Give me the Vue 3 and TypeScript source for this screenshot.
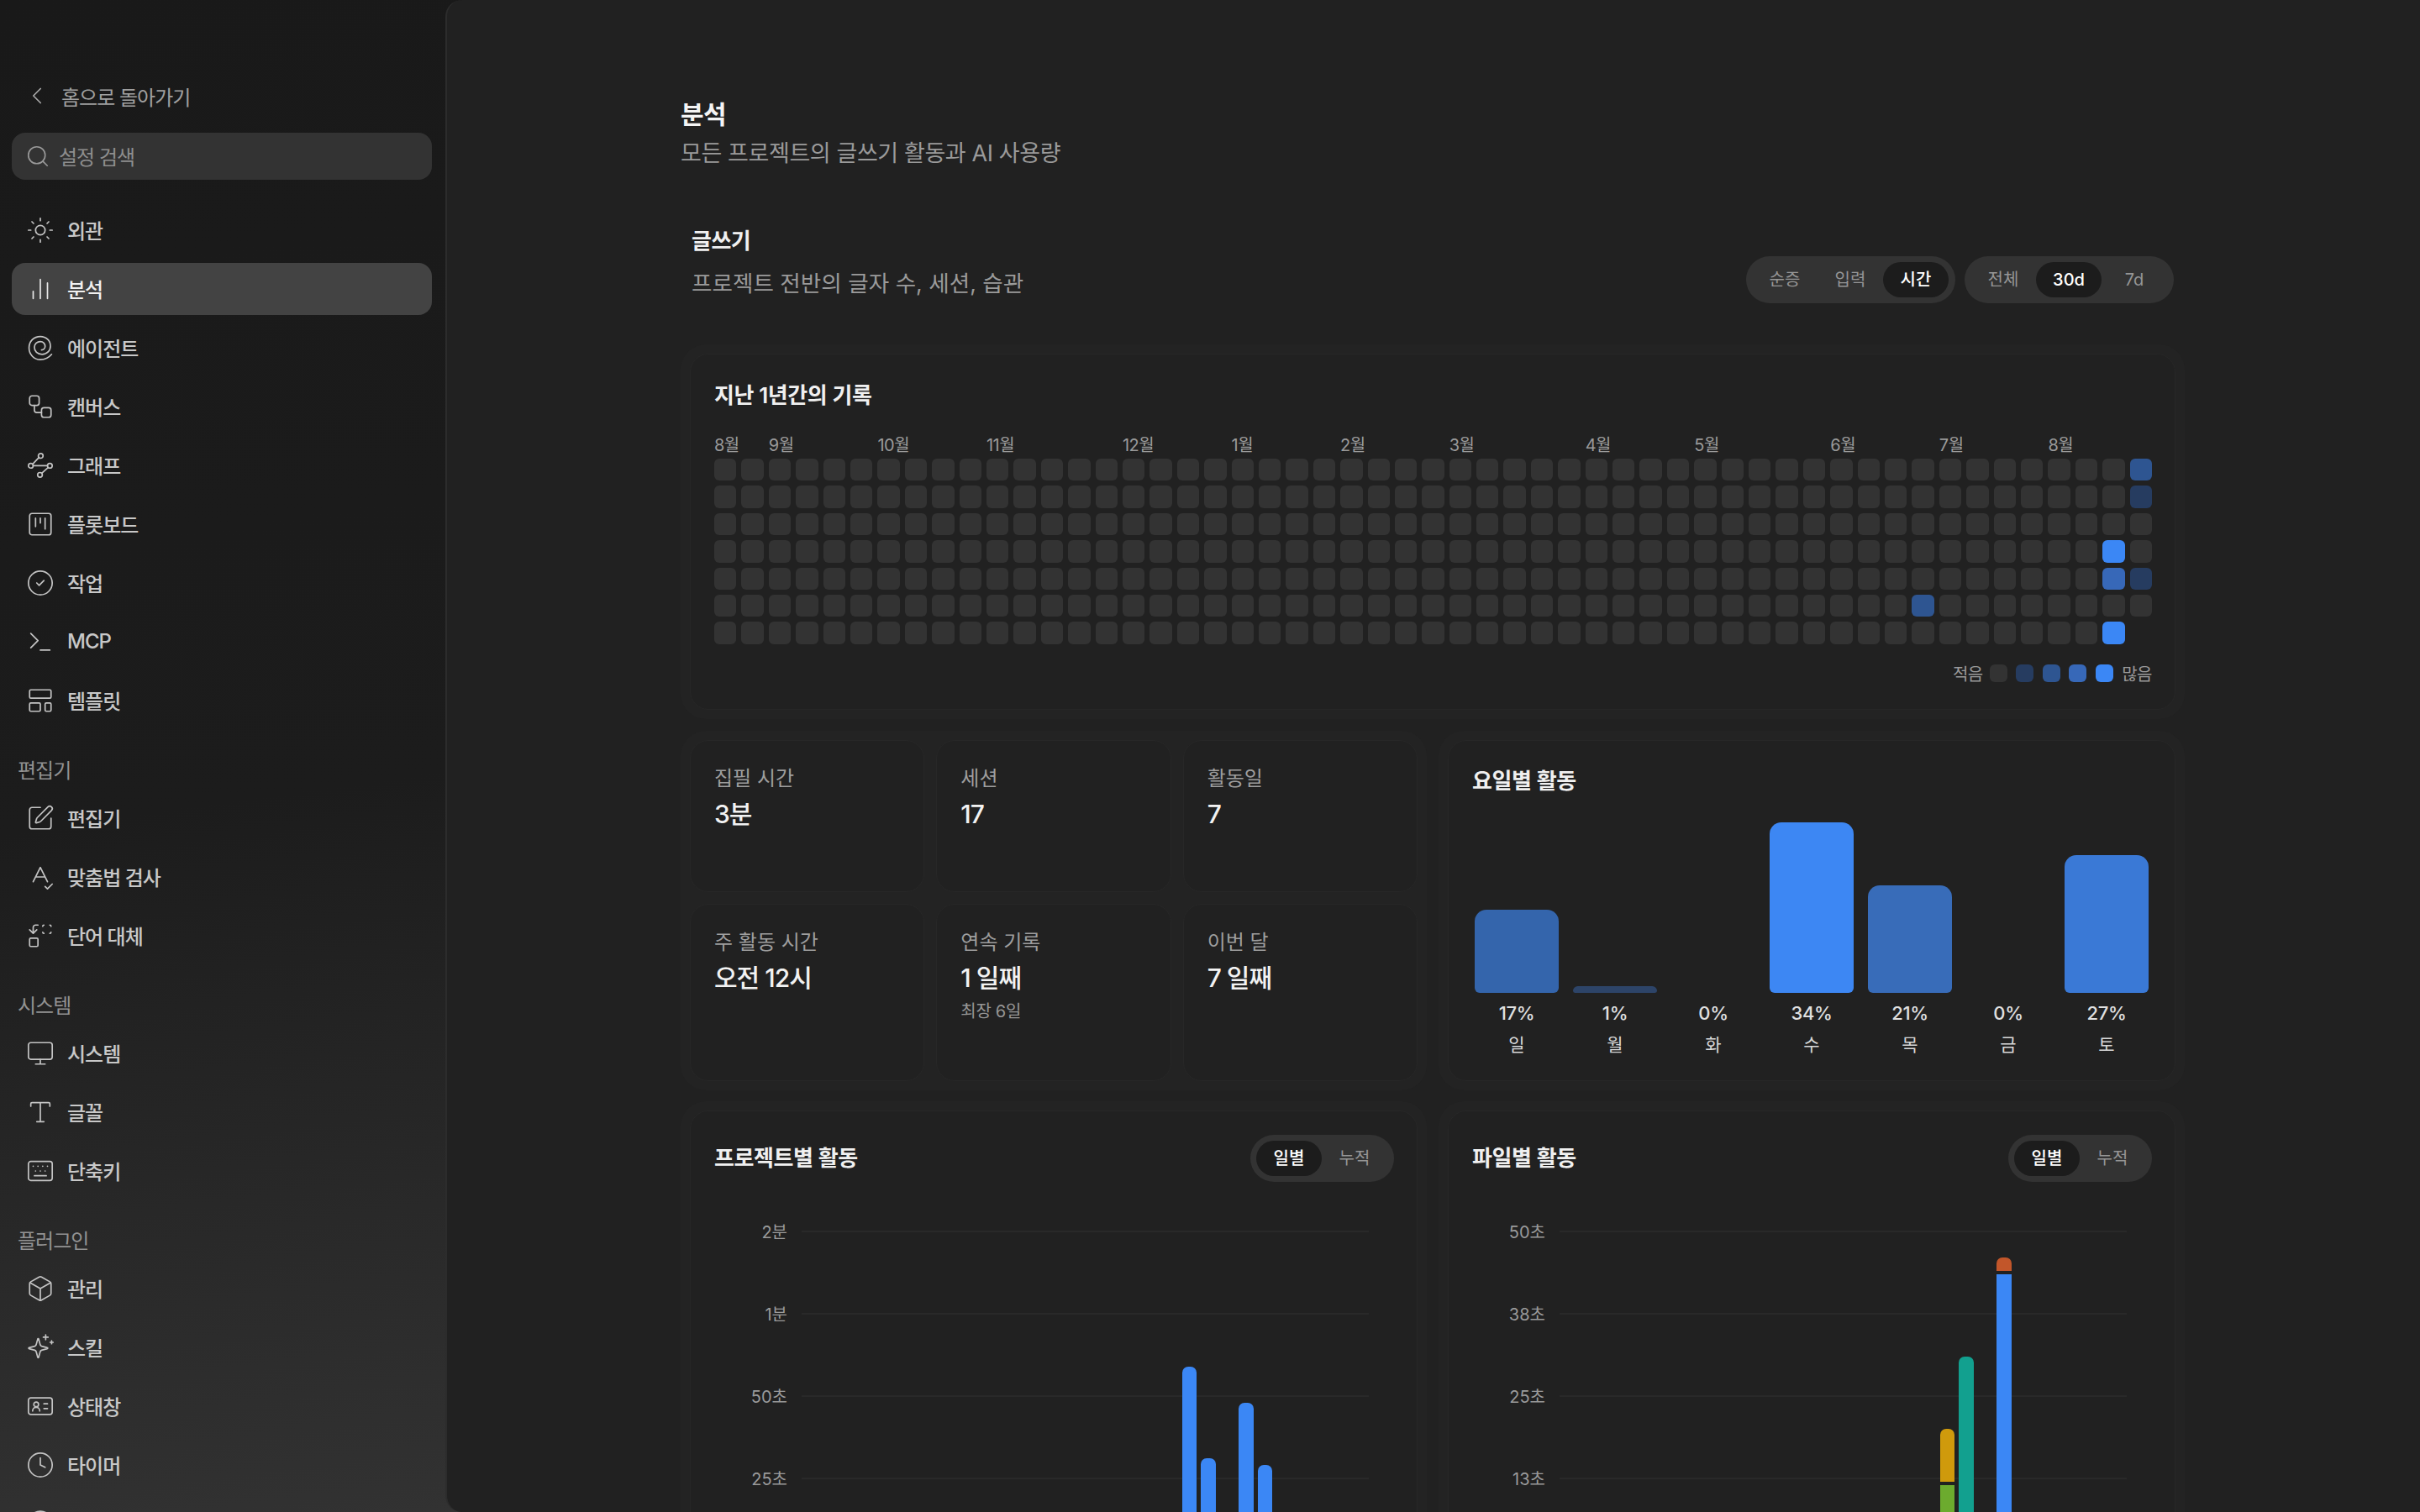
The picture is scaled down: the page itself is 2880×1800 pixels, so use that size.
<template>
  <div class="settings-page">
    <aside class="sidebar">
      <div class="back-row">
        <svg class="back-icon" viewBox="0 0 24 24" v-html="icons.chevron"></svg>
        <span>홈으로 돌아가기</span>
      </div>
      <div class="search-box">
        <svg class="icon" viewBox="0 0 24 24" v-html="icons.search"></svg>
        <span>설정 검색</span>
      </div>

      <nav class="nav-group nav-group--first">
        <div
          v-for="item in primaryNav"
          :key="item.label"
          class="nav-item"
          :class="{ 'nav-item--active': item.active }"
        >
          <svg class="icon" viewBox="0 0 24 24" v-html="icons[item.icon]"></svg>
          <span>{{ item.label }}</span>
        </div>
      </nav>

      <nav v-for="group in navGroups" :key="group.title" class="nav-group">
        <div class="nav-heading">{{ group.title }}</div>
        <div v-for="item in group.items" :key="item.icon" class="nav-item">
          <svg class="icon" viewBox="0 0 24 24" v-html="icons[item.icon]"></svg>
          <span>{{ item.label }}</span>
        </div>
      </nav>
    </aside>

    <main class="content">
      <header class="page-head">
        <h1>분석</h1>
        <p>모든 프로젝트의 글쓰기 활동과 AI 사용량</p>
      </header>

      <section class="section-head">
        <div>
          <h2>글쓰기</h2>
          <p>프로젝트 전반의 글자 수, 세션, 습관</p>
        </div>
        <div class="section-tools">
          <div class="segment">
            <span v-for="opt in metricOptions" :key="opt" :class="{ on: opt === '시간' }">{{ opt }}</span>
          </div>
          <div class="segment">
            <span v-for="opt in rangeOptions" :key="opt" :class="{ on: opt === '30d' }">{{ opt }}</span>
          </div>
        </div>
      </section>

      <div class="shell">
        <div class="card heat-card">
          <h3>지난 1년간의 기록</h3>
          <div class="heat-months">
            <span
              v-for="month in months"
              :key="month.col"
              :style="{ gridColumnStart: month.col + 1 }"
            >{{ month.label }}</span>
          </div>
          <div class="heat-grid">
            <i v-for="cell in heatCells" :key="cell.id" :class="`lv${cell.level}`"></i>
          </div>
          <div class="heat-legend">
            <span class="legend-label">적음</span>
            <i v-for="n in 5" :key="n" :class="`lv${n - 1}`"></i>
            <span>많음</span>
          </div>
        </div>
      </div>

      <div class="two-col two-col--stats">
        <div class="shell stat-grid">
          <div v-for="stat in stats" :key="stat.label" class="card stat-card">
            <div class="stat-label">{{ stat.label }}</div>
            <div class="stat-value">{{ stat.value }}</div>
            <div v-if="stat.note" class="stat-note">{{ stat.note }}</div>
          </div>
        </div>
        <div class="shell">
          <div class="card week-card">
            <h3>요일별 활동</h3>
            <div class="week-bars">
              <div v-for="day in weekdays" :key="day.label" class="week-col">
                <div class="week-track">
                  <div class="week-bar" :style="{ height: day.height + 'px', background: day.color }"></div>
                </div>
                <div class="week-pct">{{ day.pct }}</div>
                <div class="week-day">{{ day.label }}</div>
              </div>
            </div>
          </div>
        </div>
      </div>

      <div class="two-col">
        <div v-for="chart in charts" :key="chart.title" class="shell">
          <div class="card chart-card">
            <div class="chart-head">
              <h3>{{ chart.title }}</h3>
              <div class="segment">
                <span class="on">일별</span>
                <span>누적</span>
              </div>
            </div>
            <div class="chart-body">
              <div v-for="tick in chart.ticks" :key="tick" class="chart-row">
                <span>{{ tick }}</span>
                <i></i>
              </div>
              <div class="chart-bars">
                <div v-for="n in 30" :key="n" class="chart-slot">
                  <div
                    v-for="(seg, idx) in chart.bars[n - 1] || []"
                    :key="idx"
                    class="chart-seg"
                    :style="{ height: seg.height + 'px', background: seg.color }"
                  ></div>
                </div>
              </div>
            </div>
          </div>
        </div>
      </div>
    </main>
  </div>
</template>

<script setup lang="ts">
interface NavItem {
  label: string;
  icon: string;
  active?: boolean;
}

interface Segment {
  height: number;
  color: string;
}

const icons: Record<string, string> = {
  chevron: '<path d="m15 18-6-6 6-6"/>',
  search: '<circle cx="11" cy="11" r="8"/><path d="m21 21-4.3-4.3"/>',
  sun: '<circle cx="12" cy="12" r="4"/><path d="M12 2v2M12 20v2M4.93 4.93l1.41 1.41M17.66 17.66l1.41 1.41M2 12h2M20 12h2M6.34 17.66l-1.41 1.41M19.07 4.93l-1.41 1.41"/>',
  chart: '<path d="M18 20V7M12 20V4M6 20v-6"/>',
  spiral: '<path d="M21.500 17.500C19 20.500 15.500 22 12 22 6.500 22 2.500 17.500 2.500 12 2.500 6.500 6.500 2.500 12 2.500c5 0 8.500 3.500 8.500 8 0 4-3 7-7 7-4 0-6.500-2.500-6.500-6 0-3 2.500-4.700 5-4.700s4 2 4 4c0 1.800-1.400 3-3 3"/>',
  workflow: '<rect x="3" y="3" width="8" height="8" rx="2"/><path d="M7 11v4a2 2 0 0 0 2 2h4"/><rect x="13" y="13" width="8" height="8" rx="2"/>',
  graph: '<circle cx="4" cy="12.300" r="2"/><circle cx="12.300" cy="4" r="2"/><circle cx="20" cy="12.300" r="2"/><circle cx="11.700" cy="20" r="2"/><path d="M5.500 11 10.800 5.400M6 12.300h12M18.500 13.800 13.200 18.600"/>',
  kanban: '<rect x="3" y="3" width="18" height="18" rx="2"/><path d="M8 7v7M12 7v4M16 7v9"/>',
  check: '<circle cx="12" cy="12" r="10"/><path d="m9 12 2 2 4-4"/>',
  terminal: '<path d="m4 17 6-6-6-6M12 19h8"/>',
  template: '<rect x="3" y="3" width="18" height="7" rx="1"/><rect x="3" y="14" width="9" height="7" rx="1"/><rect x="16" y="14" width="5" height="7" rx="1"/>',
  pen: '<path d="M12 3H5a2 2 0 0 0-2 2v14a2 2 0 0 0 2 2h14a2 2 0 0 0 2-2v-7"/><path d="M18.375 2.625a1 1 0 0 1 3 3l-9.013 9.014a2 2 0 0 1-.853.505l-2.873.84a.5.5 0 0 1-.62-.62l.84-2.873a2 2 0 0 1 .506-.852z"/>',
  spell: '<path d="m6 16 6-12 6 12M8 12h8M16 20l2 2 4-4"/>',
  replace: '<path d="M14 4a1 1 0 0 1 1-1M15 10a1 1 0 0 1-1-1M21 4a1 1 0 0 0-1-1M21 9a1 1 0 0 1-1 1M3 7l3 3 3-3M6 10V5a2 2 0 0 1 2-2h2"/><rect x="3" y="14" width="7" height="7" rx="1"/>',
  monitor: '<rect x="2" y="3" width="20" height="14" rx="2"/><path d="M8 21h8M12 17v4"/>',
  type: '<path d="M12 4v16M4 7V5a1 1 0 0 1 1-1h14a1 1 0 0 1 1 1v2M9 20h6"/>',
  keyboard: '<path d="M10 8h.01M12 12h.01M14 8h.01M16 12h.01M18 8h.01M6 8h.01M7 16h10M8 12h.01"/><rect x="2" y="4" width="20" height="16" rx="2"/>',
  box: '<path d="M21 8a2 2 0 0 0-1-1.730l-7-4a2 2 0 0 0-2 0l-7 4A2 2 0 0 0 3 8v8a2 2 0 0 0 1 1.730l7 4a2 2 0 0 0 2 0l7-4A2 2 0 0 0 21 16Z"/><path d="m3.300 7 8.700 5 8.700-5M12 22V12"/>',
  sparkle: '<path d="M8.500 15.600a2 2 0 0 0-1.200-1.200l-4.700-1.300a.4.4 0 0 1 0-.8l4.700-1.300a2 2 0 0 0 1.200-1.200l1.300-4.700a.4.4 0 0 1 .8 0l1.300 4.700a2 2 0 0 0 1.200 1.200l4.700 1.300a.4.4 0 0 1 0 .8l-4.700 1.300a2 2 0 0 0-1.200 1.200l-1.300 4.700a.4.4 0 0 1-.8 0z"/><path d="M16.500 1.500v4M14.500 3.500h4M21.500 6.500v2.500M20.250 7.750h2.500"/>',
  status: '<rect x="2" y="5" width="20" height="14" rx="2"/><circle cx="8.500" cy="10.500" r="2"/><path d="M5.500 16a3 3 0 0 1 6 0M15 10h3M15 14h3"/>',
  clock: '<circle cx="12" cy="12" r="10"/><path d="M12 6v6l4 2"/>',
  more: '<circle cx="12" cy="11.500" r="10"/>',
};

const primaryNav: NavItem[] = [
  { label: "외관", icon: "sun" },
  { label: "분석", icon: "chart", active: true },
  { label: "에이전트", icon: "spiral" },
  { label: "캔버스", icon: "workflow" },
  { label: "그래프", icon: "graph" },
  { label: "플롯보드", icon: "kanban" },
  { label: "작업", icon: "check" },
  { label: "MCP", icon: "terminal" },
  { label: "템플릿", icon: "template" },
];

const navGroups: { title: string; items: NavItem[] }[] = [
  {
    title: "편집기",
    items: [
      { label: "편집기", icon: "pen" },
      { label: "맞춤법 검사", icon: "spell" },
      { label: "단어 대체", icon: "replace" },
    ],
  },
  {
    title: "시스템",
    items: [
      { label: "시스템", icon: "monitor" },
      { label: "글꼴", icon: "type" },
      { label: "단축키", icon: "keyboard" },
    ],
  },
  {
    title: "플러그인",
    items: [
      { label: "관리", icon: "box" },
      { label: "스킬", icon: "sparkle" },
      { label: "상태창", icon: "status" },
      { label: "타이머", icon: "clock" },
      { label: "", icon: "more" },
    ],
  },
];

const metricOptions = ["순증", "입력", "시간"];
const rangeOptions = ["전체", "30d", "7d"];

const months = [
  { label: "8월", col: 0 },
  { label: "9월", col: 2 },
  { label: "10월", col: 6 },
  { label: "11월", col: 10 },
  { label: "12월", col: 15 },
  { label: "1월", col: 19 },
  { label: "2월", col: 23 },
  { label: "3월", col: 27 },
  { label: "4월", col: 32 },
  { label: "5월", col: 36 },
  { label: "6월", col: 41 },
  { label: "7월", col: 45 },
  { label: "8월", col: 49 },
];

// col-row -> level, everything else stays empty
const activeDays: Record<string, number> = {
  "44-5": 2,
  "51-3": 4,
  "51-4": 3,
  "51-6": 4,
  "52-0": 2,
  "52-1": 1,
  "52-4": 1,
};

const heatCells: { id: string; level: number | string }[] = [];
for (let col = 0; col < 53; col++) {
  for (let row = 0; row < 7; row++) {
    const id = `${col}-${row}`;
    heatCells.push({ id, level: id === "52-6" ? "none" : activeDays[id] ?? 0 });
  }
}

const stats = [
  { label: "집필 시간", value: "3분" },
  { label: "세션", value: "17" },
  { label: "활동일", value: "7" },
  { label: "주 활동 시간", value: "오전 12시" },
  { label: "연속 기록", value: "1 일째", note: "최장 6일" },
  { label: "이번 달", value: "7 일째" },
];

const weekdays = [
  { label: "일", pct: "17%", height: 99, color: "#3465ac" },
  { label: "월", pct: "1%", height: 8, color: "#2d4468" },
  { label: "화", pct: "0%", height: 0, color: "transparent" },
  { label: "수", pct: "34%", height: 203, color: "#3d87f3" },
  { label: "목", pct: "21%", height: 128, color: "#386cb9" },
  { label: "금", pct: "0%", height: 0, color: "transparent" },
  { label: "토", pct: "27%", height: 164, color: "#3a79d6" },
];

const blue = "#3b87f5";

const charts: { title: string; ticks: string[]; bars: Record<number, Segment[]> }[] = [
  {
    title: "프로젝트별 활동",
    ticks: ["2분", "1분", "50초", "25초"],
    bars: {
      20: [{ height: 231, color: blue }],
      21: [{ height: 122, color: blue }],
      23: [{ height: 188, color: blue }],
      24: [{ height: 114, color: blue }],
    },
  },
  {
    title: "파일별 활동",
    ticks: ["50초", "38초", "25초", "13초"],
    bars: {
      20: [
        { height: 63, color: "#cf9a0c" },
        { height: 90, color: "#6cab2e" },
      ],
      21: [{ height: 243, color: "#12a08f" }],
      23: [
        { height: 16, color: "#c2562a" },
        { height: 341, color: blue },
      ],
    },
  },
];
</script>

<style>
html,
body {
  margin: 0;
  height: 1800px;
  overflow: hidden;
  background: #1b1b1b;
}
</style>

<style scoped>
.settings-page {
  display: flex;
  height: 1800px;
  overflow: hidden;
  font-family: Inter, "Noto Sans CJK KR", sans-serif;
  background: linear-gradient(172deg, #191919 0%, #1c1c1c 45%, #2b2b2b 72%, #3a3a3a 100%);
}

/* Sidebar */
.sidebar {
  box-sizing: border-box;
  flex: 0 0 530px;
  padding: 94px 16px 0 14px;
}

.back-row {
  display: flex;
  align-items: center;
  gap: 12px;
  height: 40px;
  padding-left: 13px;
  font-size: 24px;
  letter-spacing: -1px;
  color: #a0a0a0;
}

.back-icon {
  width: 34px;
  height: 34px;
  fill: none;
  stroke: #a8a8a8;
  stroke-width: 1.2;
  stroke-linecap: round;
  stroke-linejoin: round;
}

.search-box {
  display: flex;
  align-items: center;
  gap: 10px;
  height: 56px;
  margin-top: 24px;
  padding: 0 0 0 16px;
  border-radius: 16px;
  background: #333333;
  font-size: 24px;
  letter-spacing: -1px;
  color: #8e8e8e;
}

.search-box span {
  padding-bottom: 2px;
}

.icon {
  flex: none;
  width: 34px;
  height: 34px;
  fill: none;
  stroke: #c4c4c4;
  stroke-width: 1.200;
  stroke-linecap: round;
  stroke-linejoin: round;
}

.search-box .icon {
  width: 30px;
  height: 30px;
  stroke: #9a9a9a;
  stroke-width: 1.300;
}

.nav-group {
  display: flex;
  flex-direction: column;
  gap: 8px;
  margin-top: 36px;
}

.nav-group--first {
  margin-top: 29px;
}

.nav-heading {
  height: 30px;
  margin-bottom: 4px;
  padding-left: 7px;
  font-size: 24px;
  line-height: 34px;
  letter-spacing: -1px;
  color: #929292;
}

.nav-item {
  display: flex;
  flex: none;
  align-items: center;
  gap: 15px;
  height: 62px;
  padding-left: 17px;
  border-radius: 16px;
  font-size: 24px;
  font-weight: 500;
  letter-spacing: -1px;
  color: #c8c8c8;
}

.nav-item span {
  padding-bottom: 2px;
}

.nav-item--active {
  background: #434343;
  color: #f0f0f0;
}

.nav-item--active .icon {
  stroke: #e8e8e8;
}

/* Main panel */
.content {
  box-sizing: border-box;
  flex: 1;
  min-width: 0;
  height: 1800px;
  overflow: hidden;
  padding: 116px 280px 0 278px;
  border-left: 2px solid #2c2c2c;
  border-radius: 20px 0 0 20px;
  background: #212121;
}

.page-head h1 {
  margin: 0;
  font-size: 30px;
  font-weight: 600;
  line-height: 40px;
  letter-spacing: -0.6px;
  color: #f4f4f4;
}

.page-head p {
  margin: 7px 0 0;
  font-size: 27px;
  line-height: 40px;
  letter-spacing: -0.4px;
  color: #9a9a9a;
}

.section-head {
  display: flex;
  align-items: flex-end;
  justify-content: space-between;
  margin: 64px 0 49px;
  padding: 0 13px;
}

.section-head h2 {
  margin: 0;
  font-size: 26px;
  font-weight: 600;
  line-height: 40px;
  letter-spacing: -0.5px;
  color: #f0f0f0;
}

.section-head p {
  margin: 10px 0 4px;
  font-size: 26.600px;
  line-height: 40px;
  color: #9a9a9a;
}

.section-tools {
  display: flex;
  gap: 11px;
}

.segment {
  display: flex;
  box-sizing: border-box;
  height: 56px;
  padding: 7px 8px 7px 7px;
  border-radius: 28px;
  background: #333333;
}

.segment span {
  width: 78px;
  border-radius: 21px;
  font-size: 20px;
  line-height: 42px;
  text-align: center;
  color: #969696;
}

.segment span.on {
  background: #1c1c1c;
  font-weight: 500;
  color: #ffffff;
}

/* Cards */
.shell {
  padding: 11px;
  border-radius: 30px;
  background: #232323;
}

.card {
  box-sizing: border-box;
  border: 1px solid #272727;
  border-radius: 22px;
  background: #212121;
}

h3 {
  margin: 0;
  font-size: 26px;
  font-weight: 600;
  line-height: 36px;
  letter-spacing: -0.4px;
  color: #f0f0f0;
}

.heat-card {
  height: 424px;
  padding: 31px 27px 0 28px;
}

.heat-months {
  display: grid;
  grid-template-columns: repeat(53, minmax(0, 1fr));
  column-gap: 6px;
  height: 26px;
  margin: 28px 0 3px;
  font-size: 20px;
  line-height: 26px;
  letter-spacing: -0.5px;
  color: #9a9a9a;
}

.heat-months span {
  grid-row: 1;
  white-space: nowrap;
}

.heat-grid {
  display: grid;
  grid-auto-flow: column;
  grid-template-columns: repeat(53, minmax(0, 1fr));
  grid-template-rows: repeat(7, 26.400px);
  gap: 6px;
}

.heat-grid i,
.heat-legend i {
  display: block;
  border-radius: 6px;
}

.lv0 {
  background: #333333;
}

.lv1 {
  background: #263c60;
}

.lv2 {
  background: #2e5591;
}

.lv3 {
  background: #3768b8;
}

.lv4 {
  background: #3b87f5;
}

.lvnone {
  background: transparent;
}

.heat-legend {
  display: flex;
  align-items: center;
  justify-content: flex-end;
  height: 22px;
  margin-top: 24px;
  font-size: 20px;
  letter-spacing: -0.5px;
  color: #9a9a9a;
}

.heat-legend i {
  width: 21px;
  height: 21px;
  margin-right: 10.500px;
}

.legend-label {
  margin-right: 8px;
}

.two-col {
  display: grid;
  grid-template-columns: 1fr 1fr;
  gap: 14px;
  margin-top: 13px;
}

.two-col--stats {
  margin-top: 14px;
}

.stat-grid {
  display: grid;
  grid-template-columns: repeat(3, 1fr);
  grid-template-rows: 181px 211px;
  gap: 14px;
}

.stat-card {
  padding: 27px 28px 0;
}

.stat-label {
  font-size: 24px;
  line-height: 36px;
  color: #9e9e9e;
}

.stat-value {
  margin-top: 3px;
  font-size: 30px;
  font-weight: 500;
  line-height: 42px;
  letter-spacing: -1px;
  color: #f2f2f2;
}

.stat-note {
  margin-top: 5px;
  font-size: 20px;
  line-height: 28px;
  letter-spacing: -0.3px;
  color: #969696;
}

.week-card {
  height: 406px;
  padding: 30px 28px 0;
}

.week-bars {
  display: grid;
  grid-template-columns: repeat(7, 100px);
  justify-content: space-between;
  margin: 0 3px;
}

.week-track {
  display: flex;
  align-items: flex-end;
  height: 234px;
}

.week-bar {
  width: 100%;
  border-radius: 14px 14px 6px 6px;
}

.week-col {
  text-align: center;
}

.week-pct {
  margin-top: 8px;
  font-size: 22px;
  font-weight: 500;
  line-height: 32px;
  letter-spacing: -0.3px;
  color: #e0e0e0;
}

.week-day {
  margin-top: 6px;
  font-size: 21px;
  line-height: 32px;
  color: #d8d8d8;
}

.chart-card {
  height: 700px;
  padding: 28px 27px 0 28px;
}

.chart-head {
  display: flex;
  align-items: center;
  justify-content: space-between;
}

.chart-body {
  position: relative;
  margin-top: 10px;
}

.chart-row {
  display: flex;
  align-items: center;
  gap: 17px;
  height: 98px;
  font-size: 20px;
  color: #9a9a9a;
}

.chart-row span {
  flex: none;
  width: 87px;
  margin-top: -2px;
  text-align: right;
}

.chart-row i {
  display: block;
  width: 675px;
  height: 2px;
  background: #292929;
}

.chart-bars {
  position: absolute;
  top: 49px;
  left: 104px;
  display: flex;
  width: 675px;
  height: 392px;
}

.chart-slot {
  display: flex;
  flex: 1;
  flex-direction: column;
  justify-content: flex-end;
  gap: 4px;
  padding: 0 2.500px;
}

.chart-seg:first-child {
  border-radius: 7px 7px 0 0;
}
</style>
